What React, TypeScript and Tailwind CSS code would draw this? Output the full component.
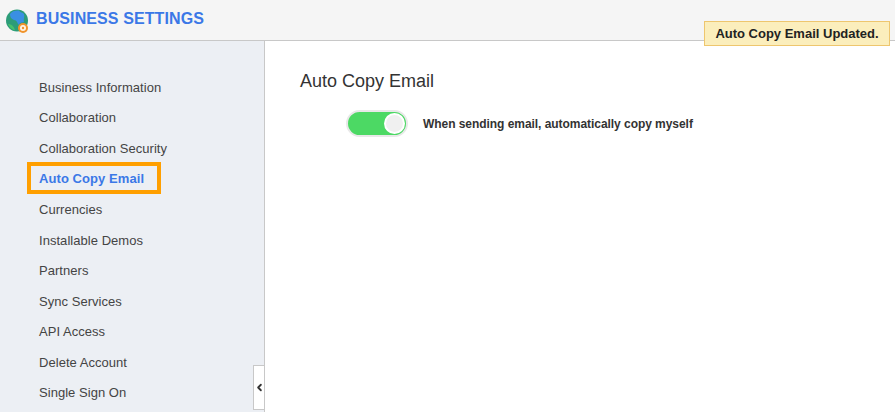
import React from 'react';
import { ChevronLeft } from 'lucide-react';

const navItems = [
  'Business Information',
  'Collaboration',
  'Collaboration Security',
  'Auto Copy Email',
  'Currencies',
  'Installable Demos',
  'Partners',
  'Sync Services',
  'API Access',
  'Delete Account',
  'Single Sign On',
];

const GlobeLogo = () => (
  <svg width="24" height="25" viewBox="0 0 24 25" className="shrink-0">
    <circle cx="11" cy="11.500" r="11" fill="#2c9c78" />
    <path d="M4 5c2-3 6-4 9-3.500 1 2 4 2 5 3.500 1 3-1 5 0 8-2 1-4 0-5 3-2-2-2-5-5-5-3-1-4-3-4-6z" fill="#3a8fe3" />
    <path d="M2 15c3 0 6 2 7 6.500-3-1-6-3-7-6.500z" fill="#46c06a" />
    <circle cx="17" cy="19" r="5" fill="#f0932b" />
    <circle cx="17" cy="19" r="3" fill="#fdf3e4" />
    <circle cx="17" cy="19" r="1.200" fill="#f0932b" />
  </svg>
);

const App: React.FC = () => {
  return (
    <div className="w-[895px] h-[412px] overflow-hidden flex flex-col bg-white font-['Liberation_Sans',Arial,sans-serif]">
      <header className="h-[41px] shrink-0 flex items-start pl-[6px] pt-[9px] gap-[6px] bg-[#f5f5f5] border-b border-[#c8c8c8]">
        <GlobeLogo />
        <h1 className="text-[16px] leading-[20px] font-bold tracking-[0.1px] text-[#3b78e7]">BUSINESS SETTINGS</h1>
      </header>

      <div className="relative flex-1 flex min-h-0">
        <aside className="w-[265px] shrink-0 bg-[#eceff4] border-r border-[#c8c8c8] pt-[31.3px]">
          <ul>
            {navItems.map((item) => {
              const active = item === 'Auto Copy Email';
              return (
                <li key={item} className="h-[30.55px] pl-[39px] flex items-center">
                  {active ? (
                    <span className="relative text-[13px] tracking-[0.08px] font-bold text-[#3b78e7]">
                      {item}
                      <span className="absolute left-[-12px] top-[-7px] w-[134px] h-[32px] border-[4px] border-[#ff9f00]" />
                    </span>
                  ) : (
                    <span className="text-[13px] tracking-[0.04px] text-[#444]">{item}</span>
                  )}
                </li>
              );
            })}
          </ul>
        </aside>

        <main className="flex-1 pl-[35px] pt-[28px]">
          <h2 className="text-[18px] leading-[24px] text-[#333]">Auto Copy Email</h2>
          <div className="mt-[17px] ml-[46px] flex items-center gap-[15px]">
            <div className="w-[62px] h-[27px] rounded-full bg-[#4cd964] border-[2px] border-[#e8e8e8] flex items-center justify-end pr-[1px]">
              <span className="w-[21px] h-[21px] rounded-full bg-[#f0f0f0] border-[2px] border-white" />
            </div>
            <span className="text-[12px] font-bold tracking-[-0.05px] text-[#333]">When sending email, automatically copy myself</span>
          </div>
        </main>

        <button className="absolute left-[253px] bottom-[2px] w-[12px] h-[45px] bg-white border border-[#c8c8c8] flex items-center justify-center text-[#333]">
          <ChevronLeft size={11} strokeWidth={4} className="shrink-0" />
        </button>
      </div>

      <div className="absolute left-[704px] top-[21px] h-[25px] w-[186px] bg-[#fbeebc] border border-[#eec66e] flex items-center justify-center text-[13px] font-bold text-[#222]">
        Auto Copy Email Updated.
      </div>
    </div>
  );
};

export default App;
